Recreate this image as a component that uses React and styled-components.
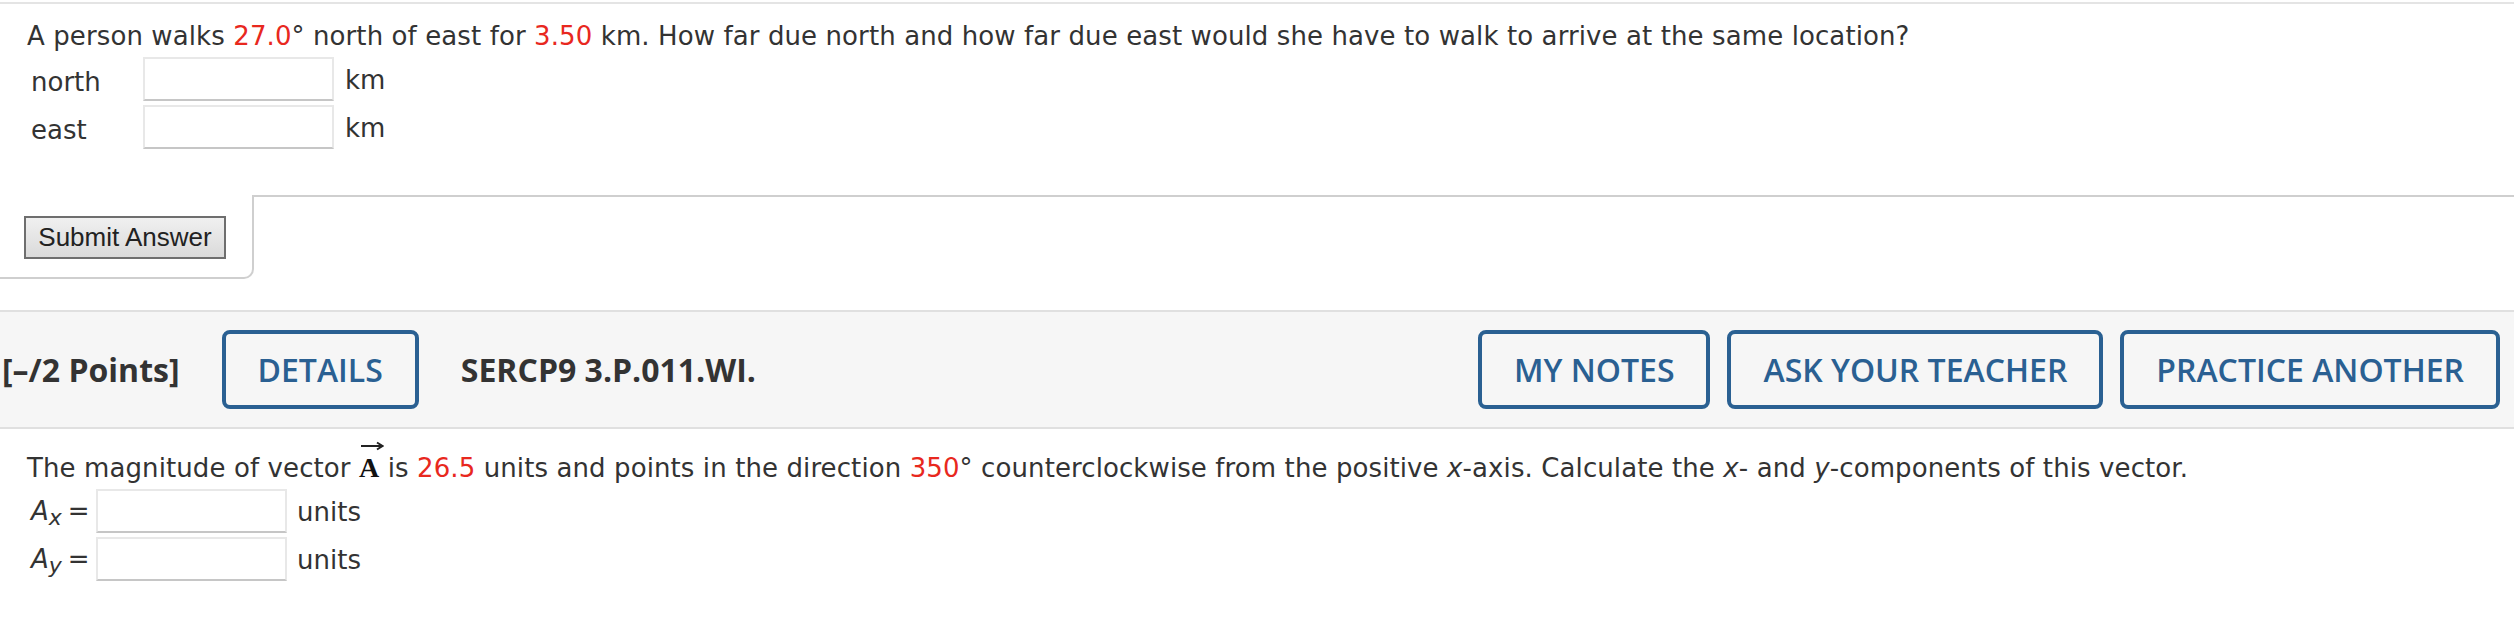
import React from 'react'
import styled, { createGlobalStyle } from 'styled-components'

const GlobalStyle = createGlobalStyle`
  html, body {
    margin: 0;
    padding: 0;
    background: #fff;
  }

  body {
    font-family: "DejaVu Sans", Verdana, sans-serif;
    font-size: 26px;
    color: #333;
  }
`

const Page = styled.div`
  width: 2514px;
  padding-top: 2px;
`

const Question = styled.section`
  border-top: ${p => p.$ruled ? '2px solid #e4e4e4' : 'none'};
  padding: ${p => p.$top}px 0 0 27px;
`

const Prompt = styled.div`
  line-height: 30px;
  margin-bottom: 6px;
  white-space: nowrap;
  letter-spacing: 0.1px;
`

const Red = styled.span`
  color: #e8281e;
`

const AnswerGrid = styled.div`
  display: grid;
  grid-template-columns: ${p => p.$labelWidth}px 191px auto;
  row-gap: 4px;
  margin-left: 4px;
`

const Label = styled.div`
  line-height: 30px;
  padding-top: ${p => p.$pad}px;
  white-space: nowrap;
`

const Unit = styled.div`
  line-height: 30px;
  padding-top: 8px;
  margin-left: ${p => p.$gap}px;
`

const Field = styled.input`
  box-sizing: border-box;
  width: 191px;
  height: 44px;
  margin: 0;
  padding: 0 6px;
  border: 2px solid #e8e8e8;
  border-bottom-color: #c6c6c6;
  background: #fff;
  font: inherit;
  outline: none;
`

const SubmitRow = styled.div`
  display: flex;
  margin-top: 46px;
`

const SubmitTab = styled.div`
  box-sizing: border-box;
  width: 254px;
  padding: 21px 0 18px 24px;
  border-right: 2px solid #cfcfcf;
  border-bottom: 2px solid #cfcfcf;
  border-bottom-right-radius: 10px;
`

const SubmitFill = styled.div`
  flex: 1;
  border-top: 2px solid #cfcfcf;
`

const SubmitButton = styled.button`
  box-sizing: border-box;
  width: 202px;
  height: 43px;
  padding: 0;
  border: 2px solid #6e6e6e;
  background: linear-gradient(#f0f0f0, #dadada);
  font-family: "Liberation Sans", Arial, sans-serif;
  font-size: 26px;
  color: #222;
  cursor: pointer;
`

const Toolbar = styled.div`
  display: flex;
  align-items: center;
  gap: 42px;
  margin-top: 31px;
  padding: 18px 14px 18px 2px;
  background: #f6f6f6;
  border-top: 2px solid #e0e0e0;
  border-bottom: 2px solid #e0e0e0;
  font-family: "Open Sans", sans-serif;
  font-size: 32px;
`

const Heading = styled.span`
  font-weight: 700;
  color: #333;
  white-space: nowrap;
`

const ToolGroup = styled.div`
  display: flex;
  gap: 17px;
  margin-left: auto;
`

const ToolButton = styled.button`
  box-sizing: border-box;
  height: 79px;
  padding: 0 32px;
  border: 4px solid #2a6092;
  border-radius: 8px;
  background: transparent;
  font-family: "Open Sans", sans-serif;
  font-size: 32px;
  font-weight: 600;
  color: #2a6092;
  white-space: nowrap;
  cursor: pointer;
`

const Vec = styled.span`
  position: relative;
  display: inline-block;
  font-family: "Liberation Serif", "DejaVu Serif", serif;
  font-weight: 700;
  font-size: 28px;
  line-height: 1;
  color: #111;
`

const VecArrow = styled.svg`
  position: absolute;
  left: 1px;
  top: -13px;
`

const MathVar = styled.i`
  font-style: italic;
`

const Sub = styled.i`
  font-style: italic;
  font-size: 22px;
  position: relative;
  top: 5px;
  margin-right: 6px;
`

function VectorA() {
  return (
    <Vec>
      A
      <VecArrow width="24" height="10" viewBox="0 0 24 10">
        <path d="M1 5 H22 M17 1.5 L22.5 5 L17 8.5" fill="none" stroke="#222" strokeWidth="2" />
      </VecArrow>
    </Vec>
  )
}

export default function App() {
  return (
    <Page>
      <GlobalStyle />
      <Question $ruled $top={17}>
        <Prompt>
          A person walks <Red>27.0</Red>° north of east for <Red>3.50</Red> km. How far due north and how far due east would she have to walk to arrive at the same location?
        </Prompt>
        <AnswerGrid $labelWidth={112}>
          <Label $pad={10}>north</Label>
          <Field type="text" />
          <Unit $gap={11}>km</Unit>
          <Label $pad={10}>east</Label>
          <Field type="text" />
          <Unit $gap={11}>km</Unit>
        </AnswerGrid>
      </Question>

      <SubmitRow>
        <SubmitTab>
          <SubmitButton>Submit Answer</SubmitButton>
        </SubmitTab>
        <SubmitFill />
      </SubmitRow>

      <Toolbar>
        <Heading>[–/2 Points]</Heading>
        <ToolButton>DETAILS</ToolButton>
        <Heading>SERCP9 3.P.011.WI.</Heading>
        <ToolGroup>
          <ToolButton>MY NOTES</ToolButton>
          <ToolButton>ASK YOUR TEACHER</ToolButton>
          <ToolButton>PRACTICE ANOTHER</ToolButton>
        </ToolGroup>
      </Toolbar>

      <Question $top={24}>
        <Prompt>
          The magnitude of vector <VectorA /> is <Red>26.5</Red> units and points in the direction <Red>350</Red>° counterclockwise from the positive <MathVar>x</MathVar>-axis. Calculate the <MathVar>x</MathVar>- and <MathVar>y</MathVar>-components of this vector.
        </Prompt>
        <AnswerGrid $labelWidth={65}>
          <Label $pad={7}><MathVar>A</MathVar><Sub>x</Sub>=</Label>
          <Field type="text" />
          <Unit $gap={10}>units</Unit>
          <Label $pad={7}><MathVar>A</MathVar><Sub>y</Sub>=</Label>
          <Field type="text" />
          <Unit $gap={10}>units</Unit>
        </AnswerGrid>
      </Question>
    </Page>
  )
}
